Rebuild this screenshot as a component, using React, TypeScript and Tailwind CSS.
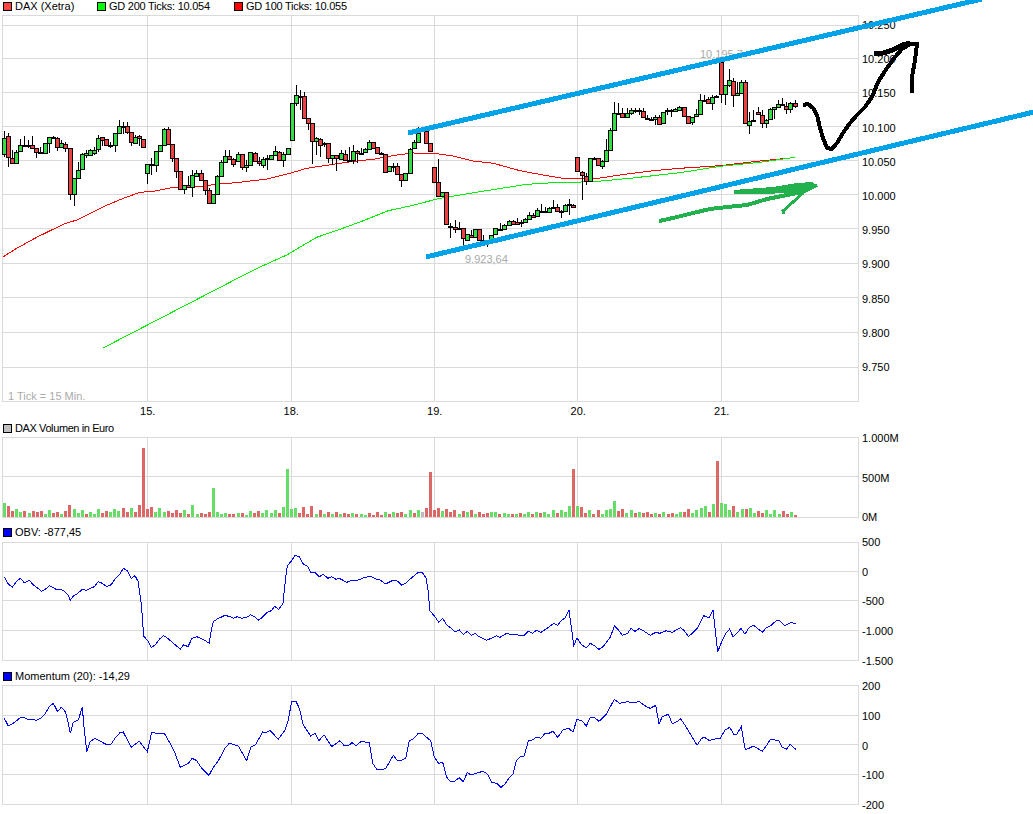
import React from 'react'

type Candle = [number, number, number, number, number, number]

/* x is the left edge in 3x crop coords, the rest page pixels: body top, body bottom, wick top, wick bottom, up */
const part1: Candle[] = [
  [7,138,154,131,157,1],[19,136,157,133,167,0],[31,158,163,150,164,0],[43,152,163,150,164,1],[55,145,151,139,152,1],[67,145,146,136,147,1],
  [79,145,146,140,148,1],[91,145,148,136,149,0],[103,148,152,148,158,0],[115,152,153,147,154,0],[130,143,153,143,154,1],[142,137,143,137,153,1],
  [154,137,138,136,139,1],[166,138,147,137,151,0],[178,143,147,140,148,1],[190,144,148,142,152,0],[205,148,194,148,200,0],[217,178,194,178,206,1],
  [229,170,178,162,179,1],[241,154,169,153,170,1],[253,153,155,150,158,1],[265,150,155,149,156,1],[277,150,153,147,155,1],[289,138,149,135,152,1],
  [301,137,140,137,146,0],[313,139,145,139,146,0],[325,145,146,142,148,1],[339,133,145,133,152,1],[351,126,133,120,134,1],[363,126,127,122,134,1],
  [375,126,132,122,134,0],[387,132,142,132,146,0],[400,137,143,135,143,1],[412,136,138,135,146,0],[424,139,147,139,147,0],[436,164,173,164,184,1],
  [448,164,165,158,175,1],[462,151,165,151,172,1],[475,145,151,145,152,1],[487,129,145,128,146,1],[499,129,144,127,145,0],[511,144,158,144,162,0],
  [523,158,171,158,178,0],[535,171,189,171,190,0],[547,185,189,185,194,1],[559,185,187,176,188,0],[571,175,187,170,197,1],[583,173,176,170,177,1],
  [598,173,180,170,181,0],[610,180,190,180,195,0],[622,190,203,188,204,0],[634,194,203,194,204,1],[646,176,194,175,195,1],[658,162,176,160,177,1],
  [670,156,162,150,163,1],[682,156,159,150,160,0],[694,159,164,158,167,0],[708,154,161,152,162,1],[720,154,167,154,170,0],[732,165,167,160,172,1],
  [744,152,165,152,166,1],[758,153,161,152,162,0],[770,161,163,157,166,0],[782,159,165,157,168,1],[794,158,159,155,170,1],[806,155,159,155,160,1],
  [818,151,155,146,156,1],[830,152,160,151,161,0],[843,154,160,152,167,1],[857,148,154,148,155,1],[869,103,140,103,141,1],[881,95,103,85,106,1],
  [893,96,97,90,110,1],[905,96,118,92,119,0],[917,118,123,118,130,0],[929,123,141,123,164,0],[941,138,141,137,155,1],[953,139,145,138,157,0],
  [965,143,144,142,147,1],[979,143,158,143,163,0],[991,155,158,155,165,1],[1003,155,158,155,171,0],
]
const part2: Candle[] = [
  [-4,153,159,150,160,1],[8,154,160,150,161,0],[20,160,161,147,162,0],[32,151,160,145,164,1],[44,151,153,150,163,0],[56,153,154,148,154,1],
  [68,149,152,148,153,1],[82,142,149,140,150,1],[94,142,148,142,149,0],[106,147,153,147,154,0],[118,153,154,152,155,0],[130,154,172,154,172,0],
  [142,166,171,166,172,1],[154,166,167,163,172,0],[166,166,174,163,175,0],[178,174,180,174,187,0],[190,173,180,173,181,1],[205,149,173,148,174,1],
  [217,142,148,140,149,1],[229,133,142,127,142,1],[253,131,143,130,144,0],[265,143,151,143,152,0],[277,167,182,167,183,0],[289,182,196,159,197,0],
  [301,192,196,192,197,1],[313,192,224,192,225,0],[325,226,227,223,238,1],[340,227,229,220,233,0],[352,228,229,222,230,1],[364,228,238,228,245,0],
  [376,234,240,234,241,1],[388,235,237,230,238,0],[400,229,237,229,238,1],[412,229,240,229,241,0],[424,240,241,235,242,1],[436,240,241,240,247,1],
  [448,235,240,235,242,1],[460,228,234,228,235,1],[475,229,230,223,231,1],[487,225,229,224,230,1],[500,221,225,220,225,1],[512,221,224,220,225,0],
  [524,222,224,218,224,0],[536,222,223,220,227,1],[548,219,222,218,223,1],[560,215,219,212,220,1],[572,215,217,213,218,0],[584,210,216,208,217,1],
  [596,211,212,204,213,1],[608,211,212,207,213,1],[620,208,212,207,213,1],[632,207,208,200,209,1],[646,207,211,204,212,0],[658,211,212,210,218,1],
  [670,205,211,204,211,1],[682,204,205,199,215,1],[694,205,207,204,208,0],[706,157,171,157,172,0],[720,172,175,171,200,0],[732,176,181,173,185,0],
  [745,158,181,158,182,1],[757,158,159,157,160,1],[769,158,165,158,166,0],[781,161,166,160,169,1],[793,150,161,139,162,1],[805,130,150,128,150,1],
  [817,113,130,102,130,1],[829,113,114,103,114,0],[841,113,117,108,117,0],[855,113,117,108,117,1],[867,110,113,108,115,1],[879,110,111,108,113,1],
  [891,110,111,108,115,1],[903,111,117,108,117,0],[915,118,119,115,119,1],[927,119,120,117,121,1],[939,117,119,115,125,1],[951,117,124,115,125,0],
  [963,112,123,112,124,1],[975,110,111,108,115,1],[987,110,111,109,117,1],[999,109,111,108,112,1],[1011,107,110,106,111,1],
]
const part3: Candle[] = [
  [7,107,116,107,116,0],[19,116,123,116,124,0],[31,117,122,117,125,1],[43,114,116,109,117,1],[55,100,114,94,115,1],[67,100,101,95,101,1],
  [79,99,103,97,104,0],[91,97,103,95,110,1],[103,96,97,95,98,1],[118,62,94,62,103,0],[130,85,94,85,105,1],[142,80,85,69,87,1],
  [154,81,95,78,107,0],[166,93,95,82,96,1],[178,82,93,80,93,1],[190,82,123,80,124,0],[202,121,125,112,134,1],[214,120,121,110,122,1],
  [229,112,114,107,115,0],[241,115,123,110,128,0],[253,120,123,119,128,1],[265,109,119,108,119,1],[277,107,109,107,119,1],[289,104,107,100,108,1],
  [301,104,105,98,106,1],[313,106,109,102,114,0],[325,103,109,102,113,1],[339,103,106,100,108,0],
]

const candles: Candle[] = [
  ...part1,
  ...part2.map(c => [c[0] + 1020, c[1], c[2], c[3], c[4], c[5]] as Candle),
  ...part3.map(c => [c[0] + 2040, c[1], c[2], c[3], c[4], c[5]] as Candle),
]

/* volume bars: [from x, to x, heights in 3x px, g/r/s colour per bar] */
const volumeParts: [number, number, number[], string][] = [
  [3, 142, [41,33,18,25,15,18,11,17,15,17,9,20,12,15,9,18,35,24,12,20,9,15,9,24,11,18,15,24,18,27,15,27,15,36,206], 'grrggrgrrrggrrgrrgggrgggrrgggrrgrrr'],
  [146, 212, [24,30,15,27,15,18,12,21,12,21,9,36,9,12,9,15,87], 'rrgggrrrrgrggrrrg'],
  [216, 286, [15,9,12,9,9,12,12,6,18,12,18,12,21,12,21,12,30,144], 'gggrrgrggrrggggrgg'],
  [290, 429, [24,27,12,30,9,33,9,21,9,15,9,15,9,12,9,12,9,9,6,12,6,15,6,15,9,15,12,15,9,21,12,21,15,27,135], 'ggrrrrgrgrgrgrrgrggrrrrgrgrrggrgsrr'],
  [433, 572, [21,27,18,24,15,21,9,18,15,21,9,15,9,12,15,15,9,12,9,9,9,12,9,15,9,15,12,15,9,21,12,21,15,33,144], 'rrgrrrgrgrgrrrggrggrgrggrgrgggrgggr'],
  [576, 716, [33,30,12,21,9,21,9,21,24,48,18,24,12,21,12,15,12,15,9,12,9,15,9,12,9,15,15,24,12,21,27,33,15,39,168], 'grrgrrggggrrggrgrrrgrgrrggrrggggrgr'],
  [720, 794, [42,39,21,33,15,24,24,27,12,18,12,21,9,21,9,18,9,15,6], 'gggrggrggrrggggrrgr'],
]

const obv1 = [13,140,25,162,37,172,49,155,61,145,73,158,88,151,100,165,112,173,124,184,136,178,148,167,160,173,172,180,184,178,196,186,204,195,211,211,220,198,232,191,247,178,259,181,271,175,283,170,295,155,307,160,321,170,333,164,345,148,358,135,370,115,382,122,394,145,405,137,415,155,418,180,423,215,427,260,431,318,443,332,454,352,466,345,478,328,491,317,503,325,517,337,529,347,541,358,551,344,564,350,576,325,590,320,603,325,616,332,628,340,632,310,640,275,652,267,675,256,690,260,700,265,712,260,726,265,740,262,752,254,764,260,776,271,790,259,802,247,814,242,824,229,836,238,849,220,853,180,858,135,862,107,875,92,885,76,898,80,910,102,924,110,932,128,945,127,958,140,970,133,984,145,994,140,1008,148,1018,145,1040,157,1055,151,1067,153,1090,144,1112,138,1125,146,1140,150,1157,162,1180,150,1192,153,1205,166,1217,160,1235,143,1255,127,1267,128,1278,143,1284,180,1290,243,1305,260,1316,277,1328,265,1340,285,1352,294,1365,306,1378,300,1390,313,1402,304,1414,316,1425,310,1437,320,1460,331,1490,317,1500,322,1520,310,1535,315]
const obv2 = [10,312,22,318,34,316,46,304,58,310,70,301,84,307,108,291,122,280,134,286,146,270,156,265,168,241,176,300,182,347,192,324,206,345,220,353,232,340,244,347,258,358,270,350,292,322,304,288,316,300,328,316,344,310,354,295,366,304,378,296,392,303,412,316,428,307,440,310,460,302,478,307,502,293,514,302,526,319,538,310,552,296,572,257,588,264,600,241,614,365,626,335,638,310,650,297,660,320,672,310,684,295,696,313,708,293,722,286,748,307,760,293,772,288,790,272,798,271,816,287,834,277,848,281]
const mom1 = [13,565,25,588,37,582,61,563,73,562,85,570,97,568,108,571,122,565,135,552,148,530,160,520,173,545,184,532,196,545,205,580,211,610,220,577,235,570,247,532,252,590,260,665,270,635,285,625,300,633,318,643,333,643,345,625,360,608,370,606,393,652,418,634,442,665,455,607,470,610,480,612,493,610,510,640,525,670,541,712,565,700,577,685,590,692,605,715,627,736,640,712,655,692,675,655,688,640,715,648,740,692,752,652,766,645,788,606,798,608,810,601,835,628,855,600,865,570,875,514,888,514,898,535,910,585,932,618,945,610,957,632,972,614,995,650,1020,632,1033,647,1045,647,1056,638,1068,647,1082,635,1108,637,1118,700,1132,720,1157,716,1180,676,1192,691,1205,691,1217,685,1228,633,1242,625,1255,610,1268,612,1292,632,1303,682,1316,700,1328,697,1340,742,1352,755,1365,753,1378,743,1390,755,1402,728,1414,735,1438,727,1450,724,1463,733,1475,757,1490,760,1503,772,1515,762,1526,745,1535,735]
const mom2 = [0,733,10,693,22,680,34,678,46,632,58,630,70,622,84,625,96,610,108,610,120,604,134,622,150,600,166,594,180,606,192,568,208,573,220,588,232,562,244,562,258,574,280,553,304,508,320,520,342,515,364,519,378,514,400,530,412,535,428,526,438,582,448,560,466,553,478,581,492,575,502,566,516,585,552,646,566,625,574,622,590,632,600,628,622,625,636,600,650,592,662,612,672,612,685,590,697,660,722,648,748,664,762,645,772,628,798,632,808,652,820,658,832,643,848,658]

const ma100 = [10,770,50,745,110,712,190,673,230,660,310,620,370,595,420,577,460,574,520,562,610,558,650,553,720,547,800,537,870,520,920,505,1020,490,1070,483,1120,478,1190,465,1240,459,1310,461,1360,468,1420,483,1480,490,1560,512,1640,527,1690,535,1780,537,1880,522,1960,512,2040,505,2160,497,2280,483,2350,476]
const ma200 = [309,1044,765,808,860,765,950,712,1020,688,1090,662,1165,632,1230,618,1320,595,1440,575,1580,553,1660,548,1780,545,1890,535,2040,518,2160,499,2280,487,2385,472]

const toPoints = (vals: number[], xBase: number, yBase: number) => {
  const out: string[] = []
  for (let i = 0; i < vals.length; i += 2) {
    out.push(`${((vals[i] + xBase) / 3).toFixed(1)},${(yBase + vals[i + 1] / 3).toFixed(1)}`)
  }
  return out.join(' ')
}

const gridColor = '#dadada'
const dayLines = [147.5, 291.5, 434.5, 577.5, 721.5]

function Frame({ top, bottom, rows }: { top: number; bottom: number; rows: number[] }) {
  return (
    <g stroke={gridColor} strokeWidth={1} shapeRendering="crispEdges">
      <rect x={2.5} y={top} width={856} height={bottom - top} fill="white" />
      {rows.map(y => <line key={y} x1={2.5} x2={858.5} y1={y} y2={y} />)}
      {dayLines.map(x => <line key={x} x1={x} x2={x} y1={top} y2={bottom} />)}
    </g>
  )
}

function Legend({ color, text, className }: { color: string; text: string; className: string }) {
  return (
    <div className={`flex items-center pl-[3px] ${className}`}>
      <span className="w-[9px] h-[9px] border border-black mr-[3px]" style={{ background: color }} />
      <span>{text}</span>
    </div>
  )
}

function Axis({ labels, step, shift }: { labels: string[]; step: number; shift: number }) {
  return (
    <div className="flex flex-col ml-[3px]" style={{ marginTop: shift }}>
      {labels.map(l => (
        <div key={l} className="flex items-center shrink-0 leading-none" style={{ height: step }}>{l}</div>
      ))}
    </div>
  )
}

const Candles = () => (
  <g shapeRendering="crispEdges">
    {candles.map(([z, t, b, wt, wb, up]) => {
      const x = Math.round(z / 3)
      return (
        <g key={z}>
          <line x1={x + 2.5} x2={x + 2.5} y1={wt} y2={wb} stroke="black" />
          <rect x={x + 0.5} y={t + 0.5} width={4} height={Math.max(b - t, 1)} fill={up ? '#33dd44' : '#ee4040'} stroke="black" />
        </g>
      )
    })}
  </g>
)

const Volume = () => (
  <g shapeRendering="crispEdges">
    {volumeParts.map(([from, to, heights, colors]) =>
      heights.map((h, i) => {
        const x = Math.round(from + (i * (to - from)) / (heights.length - 1))
        const c = colors[i] ?? 'g'
        return (
          <rect
            key={`${from}-${i}`}
            x={x}
            y={517 - h / 3}
            width={3}
            height={h / 3}
            fill={c === 'r' ? '#dd6666' : c === 's' ? '#bbbbbb' : '#66dd66'}
          />
        )
      })
    )}
  </g>
)

export default function App() {
  return (
    <div className="relative w-[1033px] h-[814px] overflow-hidden bg-white text-black text-[11px] font-['Liberation_Sans',sans-serif]">
      {/* ── Price legend ── */}
      <div className="flex items-center h-[15px] pl-[3px] pb-[3px]">
        <span className="w-[9px] h-[9px] border border-black bg-[#ff4444] mr-[3px]" />
        <span className="w-[82px]">DAX (Xetra)</span>
        <span className="w-[9px] h-[9px] border border-black bg-[#00ff00] mr-[3px]" />
        <span className="w-[125px] tracking-[-0.25px]">GD 200 Ticks: 10.054</span>
        <span className="w-[9px] h-[9px] border border-black bg-[#ff0000] mr-[3px]" />
        <span className="tracking-[-0.25px]">GD 100 Ticks: 10.055</span>
      </div>

      {/* ── Price chart ── */}
      <div className="flex h-[387px] pl-[2px]">
        <div className="relative w-[857px] h-[387px] shrink-0">
          <svg width={857} height={387} viewBox="2 15 857 387" className="block">
            <Frame top={15.5} bottom={401.5} rows={[25.5, 58.5, 92.5, 126.5, 160.5, 194.5, 228.5, 263.5, 297.5, 332.5, 367.5]} />
            <polyline points={toPoints(ma100, 0, 0)} fill="none" stroke="#ff0000" strokeWidth={1} shapeRendering="crispEdges" />
            <polyline points={toPoints(ma200, 0, 0)} fill="none" stroke="#00ee00" strokeWidth={1} shapeRendering="crispEdges" />
            <Candles />
          </svg>
          <span className="absolute left-[698px] top-[31px] text-[#aaaaaa]">10.195,7</span>
          <span className="absolute left-[463px] top-[236px] text-[#aaaaaa]">9.923,64</span>
          <span className="absolute left-[6px] top-[373px] text-[#aaaaaa]">1 Tick = 15 Min.</span>
        </div>
        <Axis
          labels={['10.250', '10.200', '10.150', '10.100', '10.050', '10.000', '9.950', '9.900', '9.850', '9.800', '9.750']}
          step={34.2}
          shift={-6.5}
        />
      </div>

      {/* ── Day labels ── */}
      <div className="flex items-center h-[18px] ml-[76px]">
        {['15.', '18.', '19.', '20.', '21.'].map(d => (
          <span key={d} className="w-[143.5px] text-center">{d}</span>
        ))}
      </div>

      {/* ── Volume ── */}
      <Legend color="#c0c0c0" text="DAX Volumen in Euro" className="h-[17px] tracking-[-0.4px]" />
      <div className="flex h-[81px] pl-[2px]">
        <svg width={857} height={81} viewBox="2 437 857 81" className="block shrink-0">
          <Frame top={437.5} bottom={517.5} rows={[476.5]} />
          <Volume />
        </svg>
        <Axis labels={['1.000M', '500M', '0M']} step={39.5} shift={-18} />
      </div>

      {/* ── OBV ── */}
      <Legend color="#0000ff" text="OBV: -877,45" className="h-[24px] pt-[4px]" />
      <div className="flex h-[119px] pl-[2px]">
        <svg width={857} height={119} viewBox="2 542 857 119" className="block shrink-0">
          <Frame top={542.5} bottom={660.5} rows={[571.5, 600.5, 630.5]} />
          <polyline points={`${toPoints(obv1, 0, 530)} ${toPoints(obv2, 1539, 530)}`} fill="none" stroke="#0000ff" strokeWidth={1} shapeRendering="crispEdges" />
        </svg>
        <Axis labels={['500', '0', '-500', '-1.000', '-1.500']} step={29.6} shift={-14} />
      </div>

      {/* ── Momentum ── */}
      <Legend color="#0000ff" text="Momentum (20): -14,29" className="h-[24px] pt-[6px]" />
      <div className="flex h-[120px] pl-[2px]">
        <svg width={857} height={120} viewBox="2 685 857 120" className="block shrink-0">
          <Frame top={685.5} bottom={804.5} rows={[715.5, 744.5, 774.5]} />
          <polyline points={`${toPoints(mom1, 0, 530)} ${toPoints(mom2, 1539, 530)}`} fill="none" stroke="#0000ff" strokeWidth={1} shapeRendering="crispEdges" />
        </svg>
        <Axis labels={['200', '100', '0', '-100', '-200']} step={29.7} shift={-13} />
      </div>

      {/* hand drawn trend lines on top of everything */}
      <svg width={1033} height={814} viewBox="0 0 1033 814" className="absolute inset-0 pointer-events-none" shapeRendering="crispEdges">
        <line x1={408} y1={133} x2={982} y2={-1} stroke="#00a2e8" strokeWidth={5} />
        <line x1={426} y1={257} x2={1034} y2={112} stroke="#00a2e8" strokeWidth={5} />
        <polyline
          points="803,105 808,104 813,108 817,115 820,128 823,138 827,148 832,149 837,143 843,133 850,123 857,115 865,107 872,97 878,82 887,68 895,57 902,49 910,44 917,44 915,60 912,77 912,93"
          fill="none" stroke="#000000" strokeWidth={4} strokeLinejoin="round"
        />
        <polyline points="874,54 883,53 893,50 902,45 910,43" fill="none" stroke="#000000" strokeWidth={5} />
        <polygon points="734,190 773,187 797,183 812,182 817,186 800,192 767,194 734,194" fill="#22b14c" />
        <polyline
          points="659,221 673,218 693,213 710,209 727,207 747,205 767,199 787,195 803,192 817,185"
          fill="none" stroke="#22b14c" strokeWidth={4}
        />
        <polyline points="803,193 793,202 783,211 784,214" fill="none" stroke="#22b14c" strokeWidth={3} />
      </svg>
    </div>
  )
}
